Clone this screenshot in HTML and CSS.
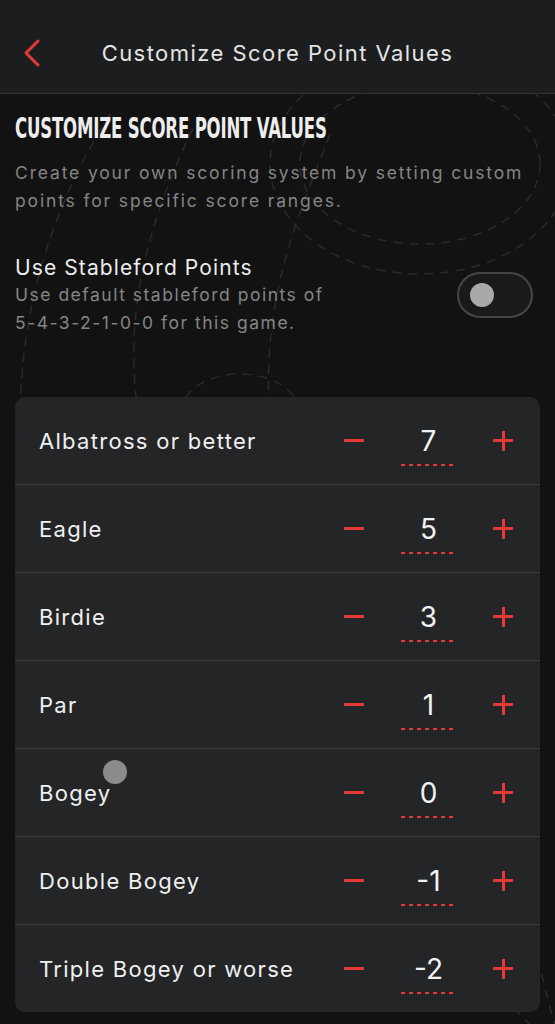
FILE: index.html
```html
<!DOCTYPE html>
<html>
<head>
<meta charset="utf-8">
<link rel="stylesheet" href="styles.css">
</head>
<body>
<div class="app">
  <header class="topbar">
    <button class="back" aria-label="Back">
      <svg width="18" height="28" viewBox="0 0 18 28"><path d="M15 2 L3 14 L15 26" fill="none" stroke="#e5383b" stroke-width="3" stroke-linecap="round" stroke-linejoin="round"/></svg>
    </button>
    <h1 class="title">Customize Score Point Values</h1>
  </header>
  <main class="content">
    <svg class="pattern" width="555" height="931" viewBox="0 0 555 931">
      <g fill="none" stroke="#2a2a2a" stroke-width="1.5" stroke-dasharray="9 7">
        <ellipse cx="420" cy="70" rx="120" ry="80"/>
        <ellipse cx="420" cy="70" rx="150" ry="110"/>
        <path d="M330 40 C300 120 260 200 270 330"/>
        <path d="M110 20 C60 100 20 200 20 330"/>
        <path d="M200 20 C150 120 120 220 140 330"/>
        <ellipse cx="240" cy="320" rx="60" ry="40"/>
        <path d="M520 820 C540 860 545 900 555 931"/>
        <path d="M480 880 C500 900 520 920 530 931"/>
      </g>
    </svg>
    <section class="intro">
      <h2 class="heading">CUSTOMIZE SCORE POINT VALUES</h2>
      <p class="desc">Create your own scoring system by setting custom points for specific score ranges.</p>
    </section>
    <section class="stableford">
      <div class="sf-text">
        <div class="sf-title">Use Stableford Points</div>
        <div class="sf-sub">Use default stableford points of<br>5-4-3-2-1-0-0 for this game.</div>
      </div>
      <div class="toggle"><span class="knob"></span></div>
    </section>
    <section class="card">
      <div class="row"><span class="label">Albatross or better</span><div class="stepper"><span class="minus"></span><span class="value">7</span><span class="plus"></span></div></div>
      <div class="row"><span class="label">Eagle</span><div class="stepper"><span class="minus"></span><span class="value">5</span><span class="plus"></span></div></div>
      <div class="row"><span class="label">Birdie</span><div class="stepper"><span class="minus"></span><span class="value">3</span><span class="plus"></span></div></div>
      <div class="row"><span class="label">Par</span><div class="stepper"><span class="minus"></span><span class="value">1</span><span class="plus"></span></div></div>
      <div class="row"><span class="label bogey">Bogey<span class="touch"></span></span><div class="stepper"><span class="minus"></span><span class="value">0</span><span class="plus"></span></div></div>
      <div class="row"><span class="label">Double Bogey</span><div class="stepper"><span class="minus"></span><span class="value">-1</span><span class="plus"></span></div></div>
      <div class="row"><span class="label">Triple Bogey or worse</span><div class="stepper"><span class="minus"></span><span class="value">-2</span><span class="plus"></span></div></div>
    </section>
  </main>
</div>
</body>
</html>
```
FILE: styles.css
```css
* { box-sizing: border-box; margin: 0; padding: 0; }
html, body { background: #121213; }
body { font-family: Inter, "Noto Sans", sans-serif; color: #eee; width: 555px; height: 1024px; overflow: hidden; }
.app { display: flex; flex-direction: column; height: 1024px; }
.topbar {
  height: 94px; background: #1c1d1f; border-bottom: 1px solid #323335;
  display: flex; align-items: center; justify-content: center; position: relative; padding-top: 12px;
}
.back { position: absolute; left: 23px; top: 39px; background: none; border: 0; display: flex; }
.title { font-size: 22px; font-weight: 400; color: #e4e4e4; letter-spacing: 1.45px; }
.content { position: relative; flex: 1; padding: 0 15px; display: flex; flex-direction: column; }
.pattern { position: absolute; left: 0; top: 0; pointer-events: none; }
.intro, .stableford, .card { position: relative; }
.intro { padding-top: 17px; }
.heading {
  font-family: "DejaVu Sans Condensed", "DejaVu Sans", sans-serif; font-weight: 700; font-stretch: condensed;
  font-size: 29px; line-height: 34px; color: #ededed; transform: scaleX(0.635); transform-origin: left center;
  white-space: nowrap; letter-spacing: -0.3px;
}
.desc { margin-top: 14px; font-size: 17.5px; line-height: 28px; color: #858585; letter-spacing: 1.85px; }
.stableford { display: flex; align-items: center; justify-content: space-between; margin-top: 40px; padding-right: 7px; }
.sf-title { font-size: 21px; line-height: 26px; color: #ececec; letter-spacing: 1.1px; }
.sf-sub { font-size: 17.5px; line-height: 28px; color: #858585; letter-spacing: 1.5px; }
.toggle {
  width: 76px; height: 46px; border-radius: 23px; border: 2px solid #464648; background: #1a1a1b;
  display: flex; align-items: center; padding-left: 11px; margin-top: -2px;
}
.knob { width: 24px; height: 24px; border-radius: 50%; background: #a9a9a9; }
.card { margin-top: 60px; background: #242527; border-radius: 10px; }
.row {
  height: 88px; display: flex; align-items: center; justify-content: space-between;
  padding: 0 27px 0 24px; border-top: 1px solid #3a3b3d;
}
.row:first-child { border-top: 0; height: 87px; }
.label { font-size: 22px; line-height: 28px; color: #f0f0f0; position: relative; letter-spacing: 1.3px; }
.touch { position: absolute; left: 64px; top: -19px; width: 24px; height: 24px; border-radius: 50%; background: #8b8b8c; }
.stepper { display: flex; align-items: center; }
.minus { width: 20px; height: 3px; background: #e5383b; }
.value {
  width: 57px; margin: 8px 36px 0 36px; text-align: center; font-size: 28px; color: #f2f2f2;
  line-height: 34px; position: relative; padding-bottom: 8px;
  background-image: linear-gradient(to right, #e5383b 50%, transparent 50%);
  background-size: 8px 1.5px; background-repeat: repeat-x; background-position: 1px bottom;
}
.plus { width: 20px; height: 20px; position: relative; }
.plus::before, .plus::after { content: ""; position: absolute; background: #e5383b; }
.plus::before { left: 0; top: 8.5px; width: 20px; height: 3px; }
.plus::after { top: 0; left: 8.5px; width: 3px; height: 20px; }
```
